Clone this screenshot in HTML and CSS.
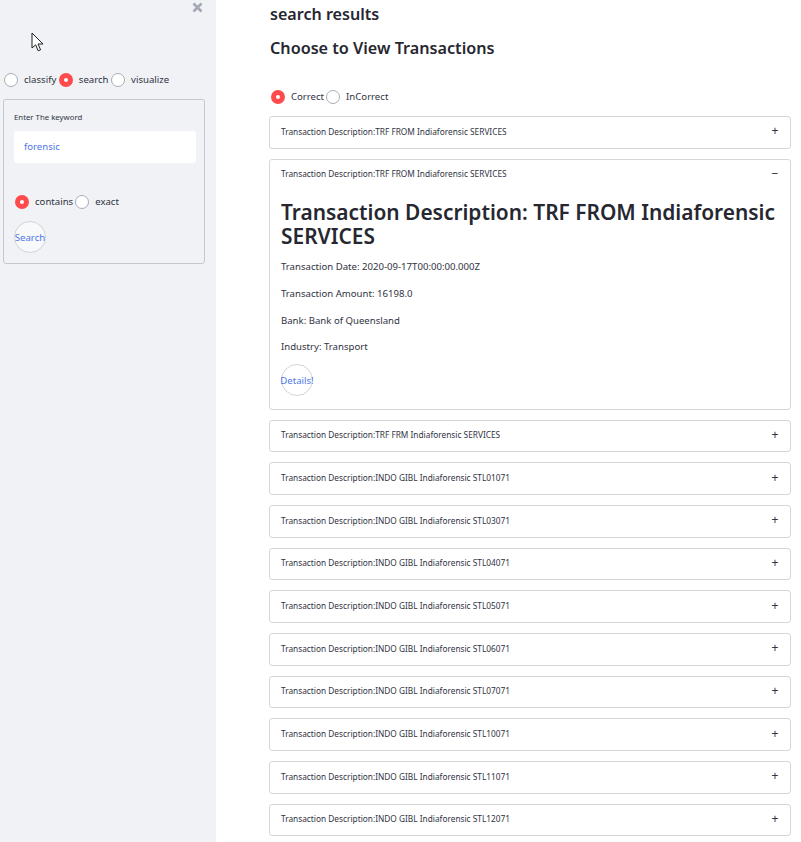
FILE: index.html
```html
<!DOCTYPE html>
<html lang="en">
<head>
<meta charset="utf-8">
<title>search results</title>
<link rel="stylesheet" href="styles.css">
</head>
<body>
<div class="app">
  <aside class="sidebar">
    <svg class="close" width="11" height="11" viewBox="0 0 11 11"><path d="M1.5 1.5l8 8M9.5 1.5l-8 8" stroke="#a3a8b4" stroke-width="2.6" fill="none"/></svg>
    <svg class="cursor" width="14" height="20" viewBox="0 0 14 20"><path d="M1 1v15l3.6-3.2 2.6 6 2.4-1-2.6-5.8h5L1 1z" fill="#fff" stroke="#1c1c22" stroke-width="1"/></svg>
    <div class="radios nav">
      <span class="radio"></span><span class="lbl">classify</span>
      <span class="radio on"></span><span class="lbl">search</span>
      <span class="radio"></span><span class="lbl">visualize</span>
    </div>
    <div class="form">
      <div class="form-label">Enter The keyword</div>
      <div class="input">forensic</div>
      <div class="radios mode">
        <span class="radio on"></span><span class="lbl">contains</span>
        <span class="radio"></span><span class="lbl">exact</span>
      </div>
      <div class="btn">Search</div>
    </div>
  </aside>
  <main class="main">
    <h3 class="title">search results</h3>
    <h3 class="subtitle">Choose to View Transactions</h3>
    <div class="radios choice">
      <span class="radio on"></span><span class="lbl">Correct</span>
      <span class="radio"></span><span class="lbl">InCorrect</span>
    </div>
    <div class="list">
      <div class="exp"><div class="head"><span>Transaction Description:TRF FROM Indiaforensic SERVICES</span><span class="sign">+</span></div></div>
      <div class="exp open">
        <div class="head"><span>Transaction Description:TRF FROM Indiaforensic SERVICES</span><span class="sign">&#8722;</span></div>
        <div class="body">
          <h1>Transaction Description: TRF FROM Indiaforensic SERVICES</h1>
          <p>Transaction Date: 2020-09-17T00:00:00.000Z</p>
          <p>Transaction Amount: 16198.0</p>
          <p>Bank: Bank of Queensland</p>
          <p>Industry: Transport</p>
          <div class="btn">Details!</div>
        </div>
      </div>
      <div class="exp"><div class="head"><span>Transaction Description:TRF FRM Indiaforensic SERVICES</span><span class="sign">+</span></div></div>
      <div class="exp"><div class="head"><span>Transaction Description:INDO GIBL Indiaforensic STL01071</span><span class="sign">+</span></div></div>
      <div class="exp"><div class="head"><span>Transaction Description:INDO GIBL Indiaforensic STL03071</span><span class="sign">+</span></div></div>
      <div class="exp"><div class="head"><span>Transaction Description:INDO GIBL Indiaforensic STL04071</span><span class="sign">+</span></div></div>
      <div class="exp"><div class="head"><span>Transaction Description:INDO GIBL Indiaforensic STL05071</span><span class="sign">+</span></div></div>
      <div class="exp"><div class="head"><span>Transaction Description:INDO GIBL Indiaforensic STL06071</span><span class="sign">+</span></div></div>
      <div class="exp"><div class="head"><span>Transaction Description:INDO GIBL Indiaforensic STL07071</span><span class="sign">+</span></div></div>
      <div class="exp"><div class="head"><span>Transaction Description:INDO GIBL Indiaforensic STL10071</span><span class="sign">+</span></div></div>
      <div class="exp"><div class="head"><span>Transaction Description:INDO GIBL Indiaforensic STL11071</span><span class="sign">+</span></div></div>
      <div class="exp"><div class="head"><span>Transaction Description:INDO GIBL Indiaforensic STL12071</span><span class="sign">+</span></div></div>
    </div>
  </main>
</div>
</body>
</html>
```
FILE: styles.css
```css
html, body { margin: 0; padding: 0; height: 842px; overflow: hidden; background: #fff; }
body { font-family: "Noto Sans", "Open Sans", sans-serif; color: #262730; }
.app { display: flex; height: 842px; overflow: hidden; }

.sidebar { position: relative; box-sizing: border-box; width: 216px; flex: none; background: #f0f2f6; padding: 73px 11px 0 4px; }
.close { position: absolute; left: 192px; top: 2px; }
.cursor { position: absolute; left: 31px; top: 32px; }

.radios { display: flex; align-items: center; font-size: 9.6px; line-height: 14px; }
.radio { box-sizing: border-box; width: 14px; height: 14px; border-radius: 50%; border: 1px solid #a9acb3; background: #fff; flex: none; }
.radio.on { border: 5px solid #ff4b4b; background: #fff; }
.lbl { margin-left: 6px; margin-right: 2px; color: #31333f; }
.nav .lbl { margin-right: 2.5px; }

.form { box-sizing: border-box; width: 202px; height: 165px; margin-left: -1px; margin-top: 12px; border: 1px solid #c6c8ce; border-radius: 3px; padding: 12px 8px 0 10px; }
.form-label { font-size: 7.8px; line-height: 11px; color: #31333f; }
.input { height: 32px; margin-top: 8px; background: #fff; border-radius: 3px; padding-left: 10px; font-size: 9.6px; line-height: 32px; color: #4f78e8; }
.mode { margin-top: 32px; margin-left: 1px; }
.sidebar .btn { margin-top: 12px; background: #f8f9fb; }

.btn { box-sizing: border-box; width: 32px; height: 32px; border: 1px solid #d3d4d8; border-radius: 50%; display: flex; align-items: center; justify-content: center; font-size: 9.6px; color: #4f78e8; white-space: nowrap; background: #fff; }

.main { box-sizing: border-box; flex: 1; min-width: 0; padding: 3px 10px 0 53px; }
.title { margin: 0 0 0 1px; font-size: 16.1px; line-height: 22px; font-weight: 600; color: #262730; }
.subtitle { margin: 12px 0 0 1px; font-size: 16.2px; line-height: 22px; font-weight: 600; color: #262730; }
.choice { margin: 31px 0 0 2px; }
.list { display: flex; flex-direction: column; gap: 10px; margin-top: 12px; }

.exp { box-sizing: border-box; border: 1px solid #d5d6da; border-radius: 3px; }
.head { display: flex; justify-content: space-between; align-items: center; height: 28.67px; padding: 0 10px 2px 11px; font-size: 8.3px; color: #31333f; }
.sign { font-size: 12px; line-height: 12px; width: 10px; text-align: center; }
.body { padding: 10px 11px 0; height: 218.3px; box-sizing: border-box; }
.body h1 { margin: 0 0 12px; font-size: 20.9px; line-height: 24px; font-weight: 600; color: #262730; }
.body p { margin: 0 0 12.7px; font-size: 9.6px; line-height: 14px; color: #31333f; }
.body .btn { margin-top: -3px; }
```
